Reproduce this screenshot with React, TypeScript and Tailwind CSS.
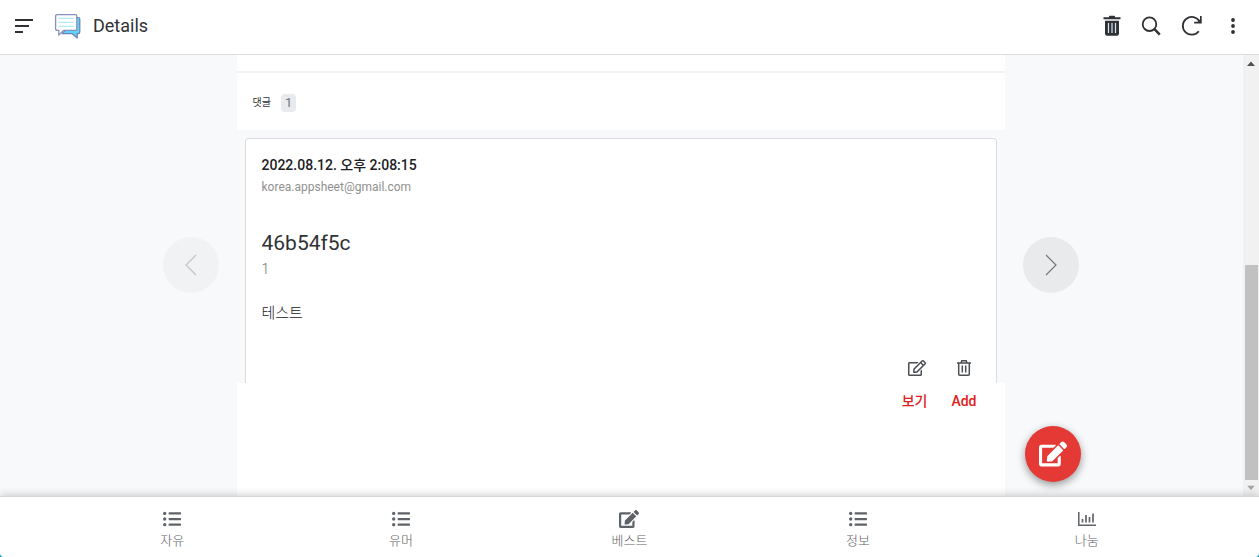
import React from 'react';
import {FaEdit, FaListUl, FaRegEdit} from "react-icons/fa";
import {IconType} from "react-icons";

interface ITab {
    id: number;
    label: string;
    icon: IconType | ((props: { className?: string }) => React.ReactElement);
    className: string;
}

function MenuIcon() {
    return (
        <svg viewBox="0 0 20 16" className="w-5 h-4" fill="none" stroke="#303134" strokeWidth="2.200">
            <path d="M1 2h18M1 8h14M1 14h8"/>
        </svg>
    );
}

function ChatLogo() {
    return (
        <svg viewBox="0 0 28 28" className="w-7 h-7">
            <path d="M22.500 5.500h1.700q1.600 0 1.600 1.600v13q0 1.600-1.600 1.600h-1v4.300l-5-4.300H8l3.500-3.500z"
                  fill="#5fd3f3" stroke="#6f7fb4" strokeWidth="1.200" strokeLinejoin="round"/>
            <path d="M3.200 2.600h18q1.600 0 1.600 1.600v12.600q0 1.600-1.600 1.600H9.500l-4.700 4.700v-4.700H3.200q-1.600 0-1.600-1.600V4.200q0-1.600 1.600-1.600z"
                  fill="#fff" stroke="#8590c0" strokeWidth="1.300" strokeLinejoin="round"/>
            <path d="M4.500 6.300h15.500M4.500 10.300h15.500M4.500 14.300h15.500" stroke="#b4e9f7" strokeWidth="1.300"/>
        </svg>
    );
}

function TrashSolid() {
    return (
        <svg viewBox="0 0 18 22" className="w-[18px] h-[22px]">
            <path d="M6 2.200V1.600Q6 .8 6.800.8h4.400q.8 0 .8.8v.6h5.500v2H.5v-2z" fill="#303134"/>
            <path d="M2 5.800h14v13q0 2-2 2H4q-2 0-2-2z" fill="#303134"/>
            <path d="M5.500 8v10M9 8v10M12.500 8v10" stroke="#d5e6f2" strokeWidth="1.200"/>
        </svg>
    );
}

function TrashOutline() {
    return (
        <svg viewBox="0 0 16 18" className="w-4 h-[18px]" fill="none" stroke="#4b4e52" strokeWidth="1.500">
            <path d="M1 4h14M5 4l.8-2.200h4.400L11 4M2.700 4v11.200q0 1 1 1h8.600q1 0 1-1V4"/>
            <path d="M6.300 6.500v7M9.700 6.500v7"/>
        </svg>
    );
}

function SearchIcon() {
    return (
        <svg viewBox="0 0 20 20" className="w-5 h-5" fill="none" stroke="#303134" strokeWidth="1.800">
            <circle cx="8.500" cy="8.200" r="6.800"/>
            <path d="M13 12.700l5.800 5.900" strokeWidth="2.400"/>
        </svg>
    );
}

function RefreshIcon() {
    return (
        <svg viewBox="0 0 22 22" className="w-[22px] h-[22px]">
            <path d="M17.800 16.200A8.900 8.900 0 1 1 18.500 6.500" fill="none" stroke="#303134" strokeWidth="1.800"/>
            <path d="M20.700 1v7.500h-7.500v-1.700h3.600l2.200-2.200V1z" fill="#303134"/>
        </svg>
    );
}

function MoreIcon() {
    return (
        <svg viewBox="0 0 4 16" className="w-1 h-4" fill="#303134">
            <circle cx="2" cy="2" r="1.900"/>
            <circle cx="2" cy="8" r="1.900"/>
            <circle cx="2" cy="14" r="1.900"/>
        </svg>
    );
}

function ChartIcon({className}: { className?: string }) {
    return (
        <svg viewBox="0 0 18 14" className={className} fill="none" stroke="currentColor" strokeWidth="1.500">
            <path d="M.8 0v13.200H18"/>
            <path d="M4.500 10.500V7M8 10.500V3M11.500 10.500V5M15 10.500V1.500" strokeWidth="1.700"/>
        </svg>
    );
}

function Chevron({d}: { d: string }) {
    return (
        <svg viewBox="0 0 12 22" className="w-3 h-[22px]" fill="none" stroke="#757779" strokeWidth="1.200">
            <path d={d}/>
        </svg>
    );
}

const tabs: ITab[] = [
    {id: 1, label: "자유", icon: FaListUl, className: "w-[18px] h-[18px]"},
    {id: 2, label: "유머", icon: FaListUl, className: "w-[18px] h-[18px]"},
    {id: 3, label: "베스트", icon: FaEdit, className: "w-5 h-[18px]"},
    {id: 4, label: "정보", icon: FaListUl, className: "w-[18px] h-[18px]"},
    {id: 5, label: "나눔", icon: ChartIcon, className: "w-[18px] h-[14px]"},
];

function Header() {
    return (
        <header className="flex items-center shrink-0 h-[55px] pb-0.5 px-3.5 bg-white border-b border-[#dadce0]">
            <button aria-label="Menu"><MenuIcon/></button>
            <div className="ml-5"><ChatLogo/></div>
            <h1 className="ml-[11px] text-lg text-[#303134]">Details</h1>
            <div className="flex items-center ml-auto pr-2.5">
                <button aria-label="Delete"><TrashSolid/></button>
                <button className="ml-5" aria-label="Search"><SearchIcon/></button>
                <button className="ml-5" aria-label="Refresh"><RefreshIcon/></button>
                <button className="ml-7" aria-label="More"><MoreIcon/></button>
            </div>
        </header>
    );
}

function CommentCard() {
    return (
        <article className="h-[245px] px-4 pt-4 bg-white border border-b-0 border-[#dadce0] rounded-t">
            <h2 className="text-sm leading-5 font-medium text-[#202124]">2022.08.12. 오후 2:08:15</h2>
            <p className="mt-0.5 text-xs leading-5 text-[#909090]">korea.appsheet@gmail.com</p>
            <h3 className="mt-8 text-[21px] leading-7 text-[#303134]">46b54f5c</h3>
            <p className="mt-0.5 text-sm leading-5 font-light text-[#757575]">1</p>
            <p className="mt-6 text-[15px] leading-5 font-light text-[#202124]">테스트</p>
            <div className="flex justify-end items-center gap-[30px] mt-9 pr-2 text-[#4b4e52]">
                <button aria-label="Edit comment"><FaRegEdit className="w-[18px] h-4"/></button>
                <button aria-label="Delete comment"><TrashOutline/></button>
            </div>
        </article>
    );
}

function ScrollTrack() {
    return (
        <div className="flex flex-col items-center shrink-0 w-4 bg-[#f1f1f1]" aria-hidden="true">
            <svg viewBox="0 0 16 17" className="w-4 h-[17px] shrink-0"><path d="M4 11l4-4.500 4 4.500z" fill="#505050"/></svg>
            <div className="flex-1"/>
            <div className="w-[13px] h-[215px] bg-[#c1c1c1]"/>
            <svg viewBox="0 0 16 17" className="w-4 h-4 shrink-0"><path d="M4 6l4 4.500L12 6z" fill="#a3a3a3"/></svg>
        </div>
    );
}

export default function App() {
    return (
        <div className="flex flex-col h-screen overflow-hidden bg-[#00a5b5] font-['Roboto','Noto_Sans_CJK_KR',sans-serif]">
            <Header/>
            <main className="relative flex flex-1 min-h-0 bg-[#f8f9fb]">
                <div className="flex flex-1 min-w-0 justify-center gap-[18px] pr-0.5 overflow-hidden">
                    <button className="flex items-center justify-center shrink-0 w-14 h-14 mt-[182px] rounded-full
                    bg-[#e8eaeb] opacity-40" aria-label="Previous" disabled>
                        <Chevron d="M11 1L1 11l10 10"/>
                    </button>
                    <section className="flex-1 max-w-3xl bg-white">
                        <div className="h-[18px] border-b-2 border-[#f1f3f4]"/>
                        <div className="flex items-center gap-2.5 h-[57px] px-4 pt-0.5">
                            <span className="text-[10px] leading-4 text-[#303134]">댓글</span>
                            <span className="px-1 rounded bg-[#e8eaed] text-[13px] leading-[18px] text-[#70757a]">1</span>
                        </div>
                        <div className="px-2 pt-2 bg-[#f8f9fb]">
                            <CommentCard/>
                        </div>
                        <div className="flex justify-end gap-6 pt-2 pr-7 text-sm leading-5 font-medium text-[#e02020]">
                            <button>보기</button>
                            <button>Add</button>
                        </div>
                    </section>
                    <button className="flex items-center justify-center shrink-0 w-14 h-14 mt-[182px] rounded-full
                    bg-[#e9eaeb]" aria-label="Next">
                        <Chevron d="M1 1l10 10L1 21"/>
                    </button>
                </div>
                <ScrollTrack/>
                <button className="absolute right-[178px] bottom-3.5 flex items-center justify-center w-14 h-14
                rounded-full bg-[#e53935] text-white shadow-[0_3px_8px_rgba(0,0,0,0.4)]" aria-label="Edit">
                    <FaEdit className="w-7 h-[26px]"/>
                </button>
            </main>
            <nav className="relative flex shrink-0 h-[61px] px-[58px] bg-white border-t border-[#d5d7da] rounded-b
            shadow-[0_-1px_8px_rgba(0,0,0,0.2)]">
                {tabs.map((tab: ITab) => (
                    <a
                        key={tab.id}
                        href="#"
                        className="flex flex-1 flex-col items-center pt-3 text-[#5f6368]">
                        <span className="flex items-center justify-center h-5">
                            <tab.icon className={tab.className}/>
                        </span>
                        <span className="mt-1 text-[13px] leading-4 font-light">{tab.label}</span>
                    </a>
                ))}
            </nav>
        </div>
    );
};
